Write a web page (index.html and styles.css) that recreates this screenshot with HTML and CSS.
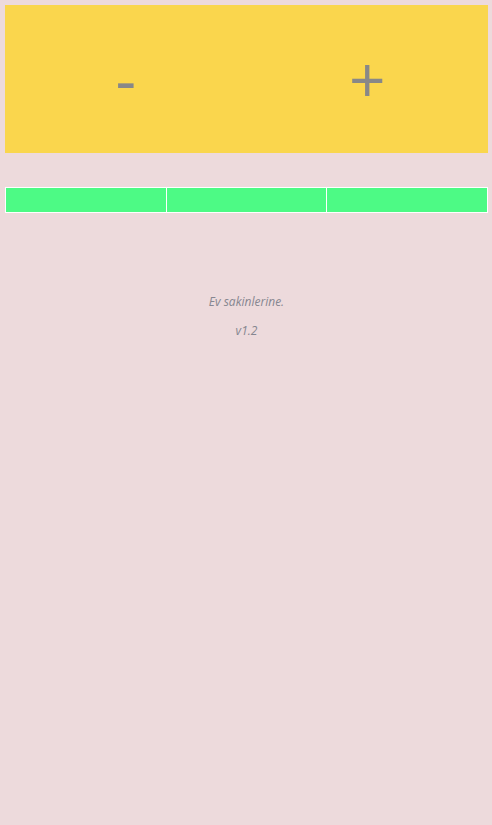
FILE: index.html
```html
<!DOCTYPE html>
<html>
<head>
<meta charset="utf-8">
<link rel="stylesheet" href="styles.css">
</head>
<body>
<div class="page">
  <div class="counter">
    <button class="btn">-</button>
    <button class="btn">+</button>
  </div>
  <div class="bars">
    <div class="cell"></div>
    <div class="cell"></div>
    <div class="cell"></div>
  </div>
  <div class="footer">
    <p class="note">Ev sakinlerine.</p>
    <p class="note">v1.2</p>
  </div>
</div>
</body>
</html>
```
FILE: styles.css
```css
html, body {
  margin: 0;
  padding: 0;
  background: #eddadc;
  height: 100%;
}
.page {
  padding: 5px 4px 0 5px;
  font-family: "Open Sans", sans-serif;
}
.counter {
  display: flex;
  height: 148px;
  background: #fad64d;
}
.btn {
  flex: 1;
  border: none;
  background: transparent;
  font-family: "Open Sans", sans-serif;
  font-size: 64px;
  color: #888888;
  padding: 0;
  line-height: 1;
  cursor: pointer;
}
.bars {
  display: flex;
  margin-top: 34px;
  height: 26px;
  border: 1px solid #ffffff;
  box-sizing: border-box;
  background: #ffffff;
  gap: 1px;
}
.cell {
  flex: 1;
  background: #4dfa85;
}
.footer {
  margin-top: 80px;
  text-align: center;
}
.note {
  margin: 0 0 12px 0;
  font-size: 12px;
  line-height: 17px;
  font-style: italic;
  color: #868690;
}
```
